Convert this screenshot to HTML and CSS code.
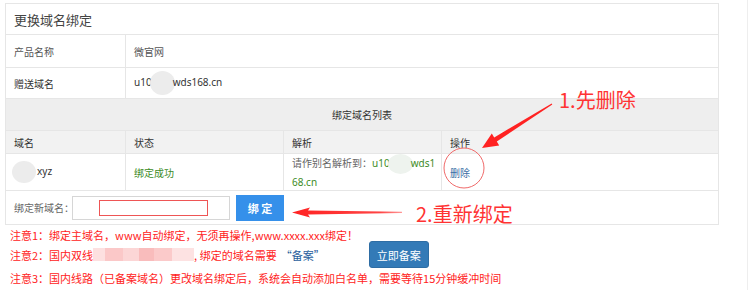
FILE: index.html
```html
<!DOCTYPE html>
<html lang="zh-CN">
<head>
  <meta charset="UTF-8" />
  <title>更换域名绑定</title>
  <link rel="stylesheet" href="styles.css">
</head>
<body>
  <div class="page">
    <table class="panel">
      <colgroup>
        <col class="c1"><col class="c2"><col class="c3"><col class="c4">
      </colgroup>
      <tr class="title-row"><td colspan="4">更换域名绑定</td></tr>
      <tr class="info-row r1"><td>产品名称</td><td colspan="3">微官网</td></tr>
      <tr class="info-row r2"><td>赠送域名</td><td colspan="3" class="latin">u10<span class="blob"></span>wds168.cn</td></tr>
      <tr class="list-head"><td colspan="4">绑定域名列表</td></tr>
      <tr class="col-head"><td>域名</td><td>状态</td><td>解析</td><td>操作</td></tr>
      <tr class="data-row">
        <td class="latin"><span class="blob small"></span>xyz</td>
        <td class="ok">绑定成功</td>
        <td class="cname">请作别名解析到：<span class="green latin">u10<span class="blob soft"></span>wds1<br>68.cn</span></td>
        <td><a class="del" href="#">删除</a></td>
      </tr>
      <tr class="bind-row">
        <td colspan="4">
          <div class="bind">
            <span class="bind-label">绑定新域名：</span>
            <div class="fake-input"><span class="mark-box"></span></div>
            <button type="button" class="bind-btn">绑 定</button>
          </div>
        </td>
      </tr>
    </table>

    <div class="notes">
      <div class="note n1">注意1：绑定主域名，www自动绑定，无须再操作,www.xxxx.xxx绑定！</div>
      <div class="note n2">注意2：国内双线<span class="pixel"></span>, 绑定的域名需要 <span class="quote">“备案”</span>
        <button type="button" class="beian-btn">立即备案</button>
      </div>
      <div class="note n3">注意3：国内线路（已备案域名）更改域名绑定后，系统会自动添加白名单，需要等待15分钟缓冲时间</div>
    </div>

    <!-- annotations drawn over the screenshot -->
    <svg class="marks" width="749" height="290" viewBox="0 0 749 290">
      <defs>
        <linearGradient id="fade" x1="0" x2="1" y1="0" y2="0">
          <stop offset="0" stop-color="#f22"/>
          <stop offset="0.8" stop-color="#f44"/>
          <stop offset="1" stop-color="#f99"/>
        </linearGradient>
      </defs>
      <polygon fill="#f22" points="551.7,103.6 494.2,137.4 491.8,133.6 482,148 499.2,145.4 496.8,141.6 552.3,104.4"/>
      <ellipse cx="464" cy="168" rx="20" ry="20" fill="none" stroke="#f06a6a" stroke-width="1"/>
      <polygon fill="url(#fade)" points="292,212.5 310,207.5 308,210.5 402,211.7 402,212.9 308,214.5 310,217.5"/>
    </svg>
    <span class="tip tip1">1.先删除</span>
    <span class="tip tip2">2.重新绑定</span>
  </div>
</body>
</html>
```

FILE: styles.css
```css
body {
  margin: 0;
  background: #fff;
  font-family: "Noto Sans CJK SC", "Noto Sans", sans-serif;
}

.page {
  position: relative;
  width: 748px;
  height: 290px;
  border-right: 1px solid #eee;
  padding-top: 3px;
  box-sizing: border-box;
  overflow: hidden;
}

.panel {
  margin-left: 5px;
  width: 713px;
  border-collapse: collapse;
  table-layout: fixed;
  font-size: 10px;
  color: #555;
}

.panel td {
  border: 1px solid #e6e6e6;
  padding: 0 8px;
}

col.c1 { width: 120px; }
col.c2 { width: 158px; }
col.c3 { width: 158px; }
col.c4 { width: 277px; }

.latin {
  font-family: "Noto Sans", "Noto Sans CJK SC", sans-serif;
}

.title-row td {
  height: 30px;
  font-size: 13px;
  color: #444;
}

.info-row.r1 td { height: 32px; }
.info-row.r2 td { height: 30px; color: #333; }

.list-head td {
  height: 31px;
  background: #eee;
  text-align: center;
  color: #333;
}

.col-head td {
  height: 22px;
  background: #f2f2f2;
  color: #333;
}

.data-row td {
  height: 34px;
  line-height: 15px;
  color: #333;
}

.data-row .ok { color: #3d8b26; }
.data-row .cname { color: #666; white-space: nowrap; }
.green { color: #3d8b26; }

.del {
  color: #3a6ea5;
  text-decoration: none;
}

.blob {
  display: inline-block;
  width: 25px;
  height: 24px;
  margin: 0 -2px;
  vertical-align: middle;
  border-radius: 50%;
  background: #ececec;
}

.blob.small {
  width: 24px;
  height: 22px;
  margin: 0 1px 0 -2px;
}

.blob.soft {
  height: 20px;
  background: #eef3ee;
}

.bind-row td {
  height: 33px;
}

.bind {
  display: flex;
  align-items: center;
}

.bind-label {
  flex-shrink: 0;
  width: 58px;
  white-space: nowrap;
  color: #666;
}

.fake-input {
  flex-shrink: 0;
  width: 158px;
  height: 24px;
  border: 1px solid #d6d6d6;
  display: flex;
  align-items: center;
  padding-left: 26px;
  box-sizing: border-box;
}

.mark-box {
  width: 109px;
  height: 16px;
  border: 1px solid #e55;
  box-sizing: border-box;
}

.bind-btn {
  margin-left: 6px;
  width: 48px;
  height: 26px;
  border: none;
  background: #3590ea;
  color: #fff;
  font-family: inherit;
  font-size: 11px;
  font-weight: bold;
  padding: 0;
}

.notes {
  padding-left: 10px;
  color: #f22;
  font-size: 11px;
}

.note {
  height: 20px;
  line-height: 20px;
  white-space: nowrap;
}

.note.n2 {
  height: 27px;
  margin-top: -4px;
  display: flex;
  align-items: center;
}

.pixel {
  display: inline-block;
  width: 101px;
  height: 13px;
  background: linear-gradient(90deg, #fde0e0 0 12%, #fbc8c8 12% 30%, #fcd6d6 30% 46%, #f9bcbc 46% 60%, #fbcaca 60% 78%, #fde2e2 78% 100%);
}

.quote { color: #2a5f9e; margin-left: 4px; }

.beian-btn {
  margin-left: 44px;
  width: 60px;
  height: 27px;
  border: 1px solid #2e6da4;
  border-radius: 3px;
  background: #337ab7;
  color: #fff;
  font-family: inherit;
  font-size: 11px;
  padding: 0;
}

.marks {
  position: absolute;
  left: 0;
  top: 0;
  pointer-events: none;
}

.tip {
  position: absolute;
  color: #f33;
  font-size: 20px;
  line-height: 24px;
  white-space: nowrap;
}

.tip1 { left: 559px; top: 88px; }
.tip2 { left: 416px; top: 202px; }
```
